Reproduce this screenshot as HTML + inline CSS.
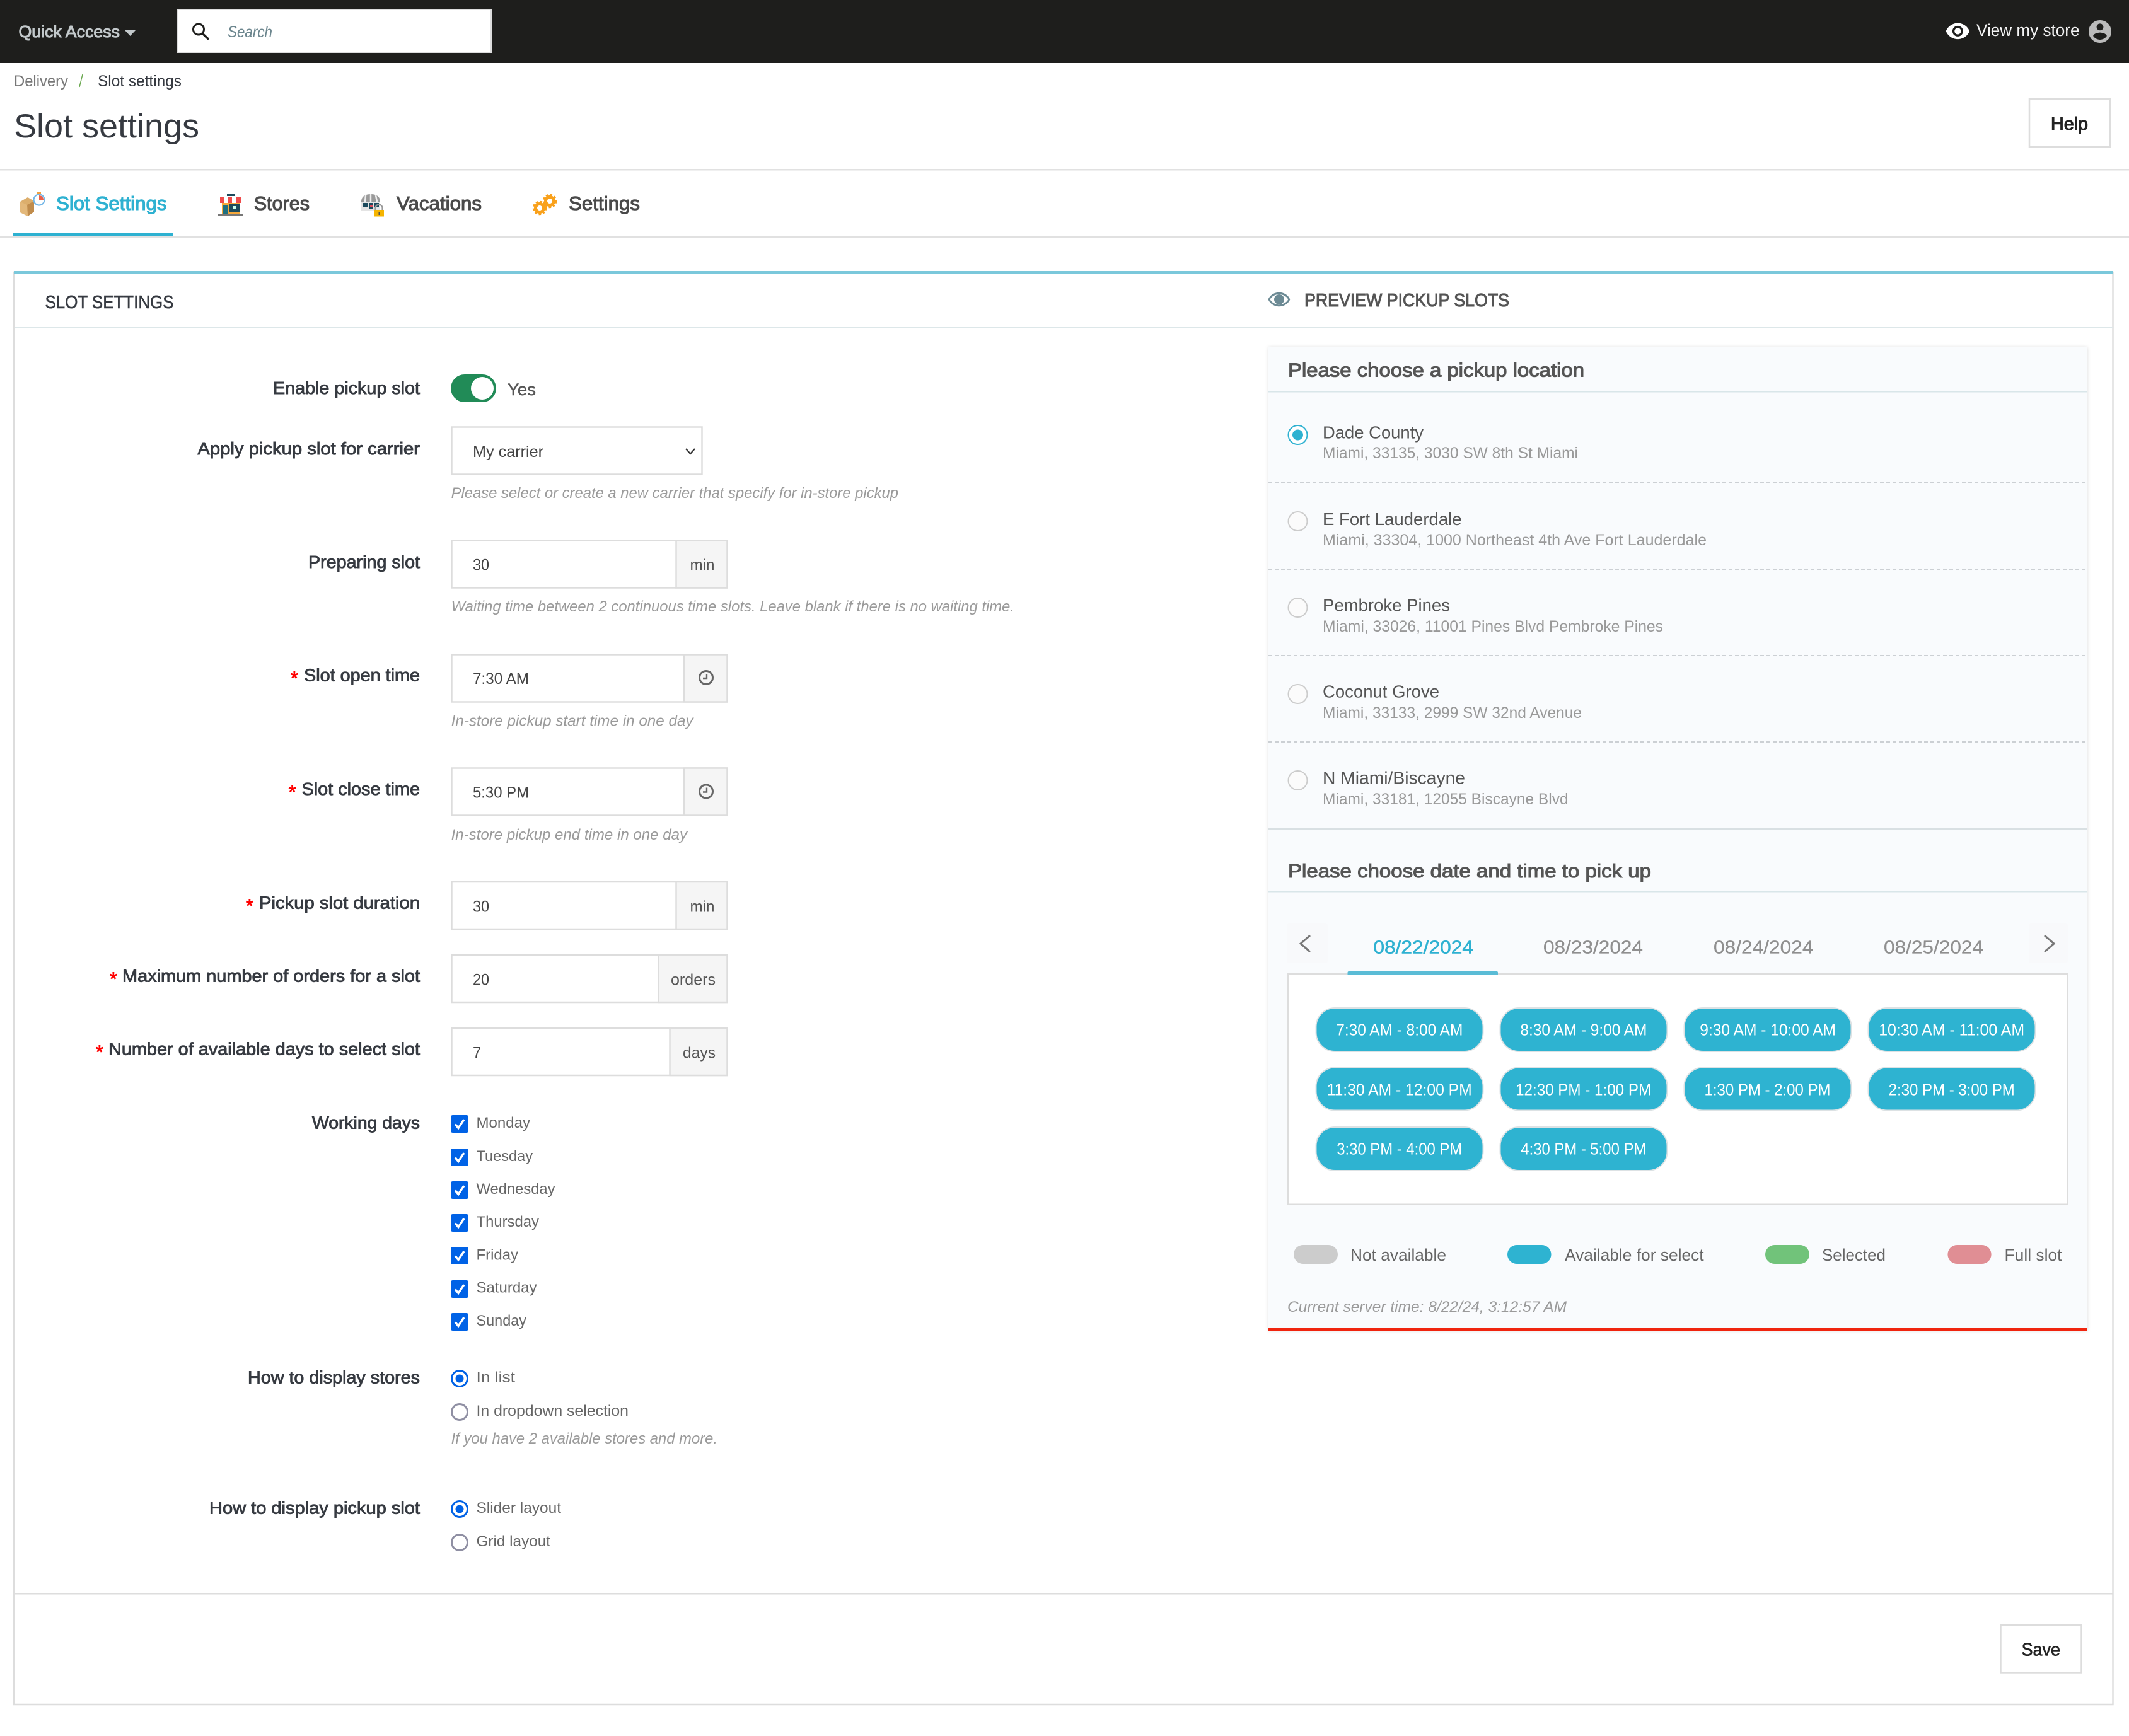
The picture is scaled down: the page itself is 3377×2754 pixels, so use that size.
<!DOCTYPE html>
<html lang="en"><head><meta charset="utf-8"><title>Slot settings</title>
<style>
html,body{margin:0;padding:0;background:#fff;width:3377px;height:2754px;overflow:hidden}
svg{display:block}
text{font-family:"Liberation Sans",sans-serif;white-space:pre}
.lab{font-size:28px;fill:#363a41;stroke:#363a41;stroke-width:.9px}
.star{font-size:30px;fill:#f00;stroke:#f00;stroke-width:.9px}
.val{font-size:25px;fill:#444}
.help{font-size:24px;fill:#9a9a9a;font-style:italic}
.opt{font-size:24.5px;fill:#666}
.tab{font-size:31px;fill:#4a4a4a;stroke:#4a4a4a;stroke-width:1.1px}
.h2{font-size:31px;fill:#555;stroke:#555;stroke-width:1.1px}
.name{font-size:28px;fill:#555}
.sub{font-size:25px;fill:#999}
.date{font-size:29px;fill:#8f8f8f;stroke:#8f8f8f;stroke-width:.3px}
.pt{font-size:26px;fill:#fff}
.leg{font-size:27px;fill:#666}
.pill{fill:#2eb3d1;stroke:#dde2e4;stroke-width:2}
.box{fill:#fff;stroke:#ddd;stroke-width:2.5}
.add{fill:#f5f5f5;stroke:#ddd;stroke-width:2.5}
</style></head><body>
<svg xmlns="http://www.w3.org/2000/svg" width="3377" height="2754" viewBox="0 0 3377 2754">
<defs>
<g id="ck"><rect width="28" height="28" rx="3" fill="#0062e6"/><path d="M7 14.5l5 6L21 7" fill="none" stroke="#fff" stroke-width="3.4"/></g>
<g id="clk"><circle r="10.5" fill="none" stroke="#666" stroke-width="3"/><path d="M1 -6V1H-5" fill="none" stroke="#666" stroke-width="2.4"/></g>
<g id="gear"><circle r="6.5" fill="none" stroke="#f9a11b" stroke-width="5"/><circle r="9.5" fill="none" stroke="#f9a11b" stroke-width="3.6" stroke-dasharray="3.4 3"/></g>
</defs>

<!-- top bar -->
<rect width="3377" height="100" fill="#1e1e1c"/>
<text x="29.5" y="59" font-size="26" fill="#c3c9cb" stroke="#c3c9cb" stroke-width="1" textLength="160.5" lengthAdjust="spacingAndGlyphs">Quick Access</text>
<path d="M198 48h17l-8.500 9z" fill="#c3c9cb"/>
<rect x="281" y="15" width="498" height="68" fill="#fff" stroke="#ddd" stroke-width="2"/>
<circle cx="315" cy="46.500" r="8.500" fill="none" stroke="#1e1e1c" stroke-width="3"/>
<path d="M321 53l10 9.500" stroke="#1e1e1c" stroke-width="3.400" fill="none"/>
<text x="361" y="59" font-size="25" font-style="italic" fill="#6c868e" textLength="71" lengthAdjust="spacingAndGlyphs">Search</text>
<path transform="translate(3085 29) scale(1.7)" fill="#fff" d="M12 4.500C7 4.500 2.730 7.610 1 12c1.730 4.390 6 7.500 11 7.500s9.270-3.110 11-7.500c-1.730-4.390-6-7.500-11-7.500zM12 17c-2.760 0-5-2.240-5-5s2.240-5 5-5 5 2.240 5 5-2.240 5-5 5zm0-8c-1.660 0-3 1.340-3 3s1.340 3 3 3 3-1.340 3-3-1.340-3-3-3z"/>
<text x="3135" y="57" font-size="27" fill="#f4f4f4" textLength="163.500" lengthAdjust="spacingAndGlyphs">View my store</text>
<path transform="translate(3309.400 28.400) scale(1.8)" fill="#bbb" d="M12 2C6.480 2 2 6.480 2 12s4.480 10 10 10 10-4.480 10-10S17.520 2 12 2zm0 3c1.660 0 3 1.340 3 3s-1.340 3-3 3-3-1.340-3-3 1.340-3 3-3zm0 14.200c-2.500 0-4.710-1.280-6-3.220.030-1.990 4-3.080 6-3.080 1.990 0 5.970 1.090 6 3.080-1.290 1.940-3.500 3.220-6 3.220z"/>

<!-- page head -->
<text x="22" y="137" font-size="25" fill="#777" textLength="86" lengthAdjust="spacingAndGlyphs">Delivery</text>
<path d="M126 138l5-20" stroke="#6aa84f" stroke-width="1.500" fill="none"/>
<text x="155" y="137" font-size="25" fill="#363a41" textLength="133" lengthAdjust="spacingAndGlyphs">Slot settings</text>
<text x="22" y="218" font-size="53" fill="#363a41" textLength="294" lengthAdjust="spacingAndGlyphs">Slot settings</text>
<rect x="3219" y="157" width="128" height="76" fill="#fff" stroke="#ddd" stroke-width="2.500"/>
<text x="3253" y="206" font-size="29" fill="#222" stroke="#222" stroke-width="1.100" textLength="59" lengthAdjust="spacingAndGlyphs">Help</text>
<rect y="268" width="3377" height="2.500" fill="#e1e1e1"/>

<!-- tabs -->
<rect y="375" width="3377" height="2" fill="#e1e1e1"/>
<rect x="21" y="369" width="254" height="6" fill="#2eb1d1"/>
<!-- box icon -->
<path d="M32 320l12-7 10 6 0 17-10 7-12-6z" fill="#dcae6c"/><path d="M43 325l11-6v17l-10 7z" fill="#c08c4c"/><path d="M32 320l11 5 1 18-12-6z" fill="#e3b87a"/>
<circle cx="62" cy="317" r="8.500" fill="#fff" stroke="#76b8e8" stroke-width="2.200"/><path d="M62 317v-7a7 7 0 0 1 7 7z" fill="#e8604c"/><rect x="59" y="305" width="6" height="2.500" fill="#f0a040"/>
<text x="89" y="333" class="tab" style="fill:#2eb1d1;stroke:#2eb1d1" textLength="175.500" lengthAdjust="spacingAndGlyphs">Slot Settings</text>
<!-- store icon -->
<rect x="352" y="322" width="29" height="18" fill="#f6a83a"/><rect x="353" y="325" width="8" height="15" fill="#1f6f80"/><rect x="364" y="324" width="16" height="12" fill="#1c4a5c"/><rect x="369" y="327" width="6" height="5" fill="#cfe"/>
<rect x="349" y="312" width="33" height="10" fill="#fff"/><path d="M349 312h6v10h-6zM361 312h7v10h-7zM375 312h7v10h-7z" fill="#ef4b4b"/>
<rect x="360" y="307" width="12" height="4" fill="#1c4a5c"/><rect x="345" y="340" width="40" height="2.500" fill="#777"/>
<text x="402.700" y="333" class="tab" textLength="88.300" lengthAdjust="spacingAndGlyphs">Stores</text>
<!-- vacations icon -->
<path d="M573 320c0-8 6-12 15-12s15 4 15 12z" fill="#9a9a9a"/><path d="M580 310l-1 10M588 308v12M596 310l2 10" stroke="#eee" stroke-width="2.500"/>
<rect x="573" y="320" width="30" height="15" fill="#e4e4e4"/><rect x="576" y="322" width="7" height="6" fill="#1c4a5c"/><rect x="586" y="322" width="5" height="9" fill="#1c4a5c"/><rect x="594" y="322" width="7" height="6" fill="#1c4a5c"/><rect x="587" y="325" width="4" height="3" fill="#e14b5a"/>
<path d="M595.500 334v-4a5.500 5.500 0 0 1 11 0v4" fill="none" stroke="#999" stroke-width="2.200"/><rect x="593" y="333" width="16" height="10.500" fill="#f5b400"/><rect x="600.500" y="336" width="1.800" height="5" fill="#555"/>
<text x="629" y="333" class="tab" textLength="135" lengthAdjust="spacingAndGlyphs">Vacations</text>
<use href="#gear" x="872" y="319"/><use href="#gear" x="856" y="330"/>
<text x="902" y="333" class="tab" textLength="113" lengthAdjust="spacingAndGlyphs">Settings</text>

<!-- main panel -->
<rect x="22" y="432" width="3329.500" height="2272" fill="#fff" stroke="#ddd" stroke-width="2.500"/>
<rect x="22" y="430" width="3330" height="4" fill="#7ac8db"/>
<rect x="23" y="518" width="3328" height="2.500" fill="#dde7e9"/>
<rect x="23" y="2527" width="3328" height="2.500" fill="#ddd"/>
<text x="71.500" y="489" font-size="29" fill="#363a41" stroke="#363a41" stroke-width=".5" textLength="204" lengthAdjust="spacingAndGlyphs">SLOT SETTINGS</text>
<path transform="translate(2010 457) scale(1.58 1.5)" fill="#6c8a94" d="M12 4.500C7 4.500 2.730 7.610 1 12c1.730 4.390 6 7.500 11 7.500s9.270-3.110 11-7.500c-1.730-4.390-6-7.500-11-7.500zM12 17.500c-3.500 0-8-2.500-9-5.500 1-3 5.500-5.500 9-5.500s8 2.500 9 5.500c-1 3-5.500 5.500-9 5.500z"/>
<circle cx="2029" cy="475" r="8" fill="#6c8a94"/>
<text x="2069" y="486" font-size="29" fill="#555" stroke="#555" stroke-width="1" textLength="325" lengthAdjust="spacingAndGlyphs">PREVIEW PICKUP SLOTS</text>

<!-- form -->
<text x="433" y="625" class="lab" textLength="233" lengthAdjust="spacingAndGlyphs">Enable pickup slot</text>
<rect x="715" y="594" width="72" height="44" rx="22" fill="#218b57"/><circle cx="765" cy="616" r="18" fill="#fff"/>
<text x="805" y="627" class="val" style="font-size:27px;fill:#555;stroke:#555;stroke-width:.4px" textLength="45" lengthAdjust="spacingAndGlyphs">Yes</text>

<text x="313.400" y="721" class="lab" textLength="352.600" lengthAdjust="spacingAndGlyphs">Apply pickup slot for carrier</text>
<rect x="716.500" y="677.500" width="397" height="75" class="box"/>
<text x="750" y="725" class="val" textLength="112" lengthAdjust="spacingAndGlyphs">My carrier</text>
<path d="M1088 712l7 8 7-8" fill="none" stroke="#333" stroke-width="2.200"/>
<text x="715.600" y="790" class="help" textLength="709.400" lengthAdjust="spacingAndGlyphs">Please select or create a new carrier that specify for in-store pickup</text>

<text x="489" y="901" class="lab" textLength="177" lengthAdjust="spacingAndGlyphs">Preparing slot</text>
<rect x="716.500" y="857.500" width="437" height="75" class="box"/><rect x="1072.500" y="857.500" width="81" height="75" class="add"/>
<text x="750" y="904.500" class="val" textLength="26" lengthAdjust="spacingAndGlyphs">30</text>
<text x="1094.500" y="904.500" class="val" style="fill:#555" textLength="39" lengthAdjust="spacingAndGlyphs">min</text>
<text x="715.600" y="970" class="help" textLength="893.400" lengthAdjust="spacingAndGlyphs">Waiting time between 2 continuous time slots. Leave blank if there is no waiting time.</text>

<text x="461" y="1086" class="star">*</text>
<text x="482" y="1080.500" class="lab" textLength="184" lengthAdjust="spacingAndGlyphs">Slot open time</text>
<rect x="716.500" y="1038.500" width="437" height="75" class="box"/><rect x="1085" y="1038.500" width="68.500" height="75" class="add"/>
<text x="750" y="1085" class="val" textLength="89" lengthAdjust="spacingAndGlyphs">7:30 AM</text>
<use href="#clk" x="1120" y="1075"/>
<text x="715.600" y="1151.500" class="help" textLength="384" lengthAdjust="spacingAndGlyphs">In-store pickup start time in one day</text>

<text x="457.700" y="1266.500" class="star">*</text>
<text x="478.500" y="1261" class="lab" textLength="187.500" lengthAdjust="spacingAndGlyphs">Slot close time</text>
<rect x="716.500" y="1218.500" width="437" height="75" class="box"/><rect x="1085" y="1218.500" width="68.500" height="75" class="add"/>
<text x="750" y="1265.500" class="val" textLength="89" lengthAdjust="spacingAndGlyphs">5:30 PM</text>
<use href="#clk" x="1120" y="1255.500"/>
<text x="715.600" y="1332" class="help" textLength="374.400" lengthAdjust="spacingAndGlyphs">In-store pickup end time in one day</text>

<text x="390" y="1447" class="star">*</text>
<text x="411" y="1441.500" class="lab" textLength="255" lengthAdjust="spacingAndGlyphs">Pickup slot duration</text>
<rect x="716.500" y="1399" width="437" height="75" class="box"/><rect x="1072.500" y="1399" width="81" height="75" class="add"/>
<text x="750" y="1446.500" class="val" textLength="26" lengthAdjust="spacingAndGlyphs">30</text>
<text x="1094.500" y="1446.500" class="val" style="fill:#555" textLength="39" lengthAdjust="spacingAndGlyphs">min</text>

<text x="174" y="1563" class="star">*</text>
<text x="194" y="1557.500" class="lab" textLength="472" lengthAdjust="spacingAndGlyphs">Maximum number of orders for a slot</text>
<rect x="716.500" y="1515" width="437" height="75" class="box"/><rect x="1044.500" y="1515" width="109" height="75" class="add"/>
<text x="750" y="1562.500" class="val" textLength="26" lengthAdjust="spacingAndGlyphs">20</text>
<text x="1064" y="1562.500" class="val" style="fill:#555" textLength="71" lengthAdjust="spacingAndGlyphs">orders</text>

<text x="152" y="1679" class="star">*</text>
<text x="172" y="1673.500" class="lab" textLength="494" lengthAdjust="spacingAndGlyphs">Number of available days to select slot</text>
<rect x="716.500" y="1631" width="437" height="75" class="box"/><rect x="1062.500" y="1631" width="91" height="75" class="add"/>
<text x="750" y="1678.500" class="val" textLength="13" lengthAdjust="spacingAndGlyphs">7</text>
<text x="1083" y="1678.500" class="val" style="fill:#555" textLength="52" lengthAdjust="spacingAndGlyphs">days</text>

<text x="495" y="1790.500" class="lab" textLength="171" lengthAdjust="spacingAndGlyphs">Working days</text>
<use href="#ck" x="715" y="1769"/><text x="755.500" y="1789" class="opt" textLength="85.500" lengthAdjust="spacingAndGlyphs">Monday</text>
<use href="#ck" x="715" y="1822"/><text x="755.500" y="1842" class="opt" textLength="89.500" lengthAdjust="spacingAndGlyphs">Tuesday</text>
<use href="#ck" x="715" y="1874"/><text x="755.500" y="1894" class="opt" textLength="125" lengthAdjust="spacingAndGlyphs">Wednesday</text>
<use href="#ck" x="715" y="1926"/><text x="755.500" y="1946" class="opt" textLength="99.500" lengthAdjust="spacingAndGlyphs">Thursday</text>
<use href="#ck" x="715" y="1978"/><text x="755.500" y="1998.500" class="opt" textLength="66.500" lengthAdjust="spacingAndGlyphs">Friday</text>
<use href="#ck" x="715" y="2031"/><text x="755.500" y="2050.500" class="opt" textLength="96" lengthAdjust="spacingAndGlyphs">Saturday</text>
<use href="#ck" x="715" y="2083"/><text x="755.500" y="2103" class="opt" textLength="79.500" lengthAdjust="spacingAndGlyphs">Sunday</text>

<text x="393" y="2194.500" class="lab" textLength="273" lengthAdjust="spacingAndGlyphs">How to display stores</text>
<circle cx="729" cy="2187" r="12.500" fill="#fff" stroke="#0062e6" stroke-width="3"/><circle cx="729" cy="2187" r="6.500" fill="#0062e6"/>
<text x="755.500" y="2193" class="opt" textLength="61.500" lengthAdjust="spacingAndGlyphs">In list</text>
<circle cx="729" cy="2240" r="12.500" fill="#fff" stroke="#8f8fa3" stroke-width="3"/>
<text x="755.500" y="2246" class="opt" textLength="241.500" lengthAdjust="spacingAndGlyphs">In dropdown selection</text>
<text x="715.600" y="2290" class="help" textLength="422.400" lengthAdjust="spacingAndGlyphs">If you have 2 available stores and more.</text>

<text x="332" y="2401.500" class="lab" textLength="334" lengthAdjust="spacingAndGlyphs">How to display pickup slot</text>
<circle cx="729" cy="2394" r="12.500" fill="#fff" stroke="#0062e6" stroke-width="3"/><circle cx="729" cy="2394" r="6.500" fill="#0062e6"/>
<text x="755.500" y="2400" class="opt" textLength="134.500" lengthAdjust="spacingAndGlyphs">Slider layout</text>
<circle cx="729" cy="2447" r="12.500" fill="#fff" stroke="#8f8fa3" stroke-width="3"/>
<text x="755.500" y="2453" class="opt" textLength="117.500" lengthAdjust="spacingAndGlyphs">Grid layout</text>

<rect x="3173.500" y="2578" width="128" height="75.500" fill="#fff" stroke="#ddd" stroke-width="2.500"/>
<text x="3206.600" y="2626.700" font-size="29" fill="#222" stroke="#222" stroke-width=".6" textLength="61.400" lengthAdjust="spacingAndGlyphs">Save</text>

<!-- preview card -->
<rect x="2012" y="551" width="1299" height="1560" fill="#f9fbfd" style="filter:drop-shadow(0 0 3px rgba(0,0,0,.14))"/>
<text x="2043" y="597.500" class="h2" textLength="470" lengthAdjust="spacingAndGlyphs">Please choose a pickup location</text>
<rect x="2012" y="620" width="1299" height="2.500" fill="#d9e6e9"/>

<circle cx="2058.500" cy="690" r="15" fill="#fff" stroke="#2eb1d1" stroke-width="2"/><circle cx="2058.500" cy="690" r="8.500" fill="#2eb1d1"/>
<text x="2098" y="695.500" class="name" textLength="160" lengthAdjust="spacingAndGlyphs">Dade County</text>
<text x="2098" y="727" class="sub" textLength="405" lengthAdjust="spacingAndGlyphs">Miami, 33135, 3030 SW 8th St Miami</text>
<path d="M2012 765.500h1299M2012 903h1299M2012 1040h1299M2012 1177h1299" stroke="#ccd0d4" stroke-width="2" stroke-dasharray="6 4" fill="none"/>

<circle cx="2058.500" cy="827" r="15" fill="#fbfbfb" stroke="#ccc" stroke-width="2"/>
<text x="2098" y="833" class="name" textLength="220.600" lengthAdjust="spacingAndGlyphs">E Fort Lauderdale</text>
<text x="2098" y="865" class="sub" textLength="609" lengthAdjust="spacingAndGlyphs">Miami, 33304, 1000 Northeast 4th Ave Fort Lauderdale</text>

<circle cx="2058.500" cy="964" r="15" fill="#fbfbfb" stroke="#ccc" stroke-width="2"/>
<text x="2098" y="969.500" class="name" textLength="202" lengthAdjust="spacingAndGlyphs">Pembroke Pines</text>
<text x="2098" y="1002" class="sub" textLength="540" lengthAdjust="spacingAndGlyphs">Miami, 33026, 11001 Pines Blvd Pembroke Pines</text>

<circle cx="2058.500" cy="1101" r="15" fill="#fbfbfb" stroke="#ccc" stroke-width="2"/>
<text x="2098" y="1106.500" class="name" textLength="185" lengthAdjust="spacingAndGlyphs">Coconut Grove</text>
<text x="2098" y="1139" class="sub" textLength="411" lengthAdjust="spacingAndGlyphs">Miami, 33133, 2999 SW 32nd Avenue</text>

<circle cx="2058.500" cy="1238" r="15" fill="#fbfbfb" stroke="#ccc" stroke-width="2"/>
<text x="2098" y="1243.500" class="name" textLength="226" lengthAdjust="spacingAndGlyphs">N Miami/Biscayne</text>
<text x="2098" y="1276" class="sub" textLength="389.600" lengthAdjust="spacingAndGlyphs">Miami, 33181, 12055 Biscayne Blvd</text>

<rect x="2012" y="1314" width="1299" height="2.500" fill="#d9e0e3"/>
<text x="2043" y="1392" class="h2" textLength="576" lengthAdjust="spacingAndGlyphs">Please choose date and time to pick up</text>
<rect x="2012" y="1413" width="1299" height="2.500" fill="#d9e6e9"/>

<rect x="2041" y="1465" width="65" height="63" rx="4" fill="#f8f9fb"/>
<rect x="3218" y="1465" width="62" height="63" rx="4" fill="#f8f9fb"/>
<path d="M2078 1484l-15 13 15 13" fill="none" stroke="#777" stroke-width="3"/>
<path d="M3243 1484l15 13-15 13" fill="none" stroke="#777" stroke-width="3"/>
<text x="2178.400" y="1512.500" class="date" style="fill:#2eb1d1;stroke:#2eb1d1;stroke-width:.6px" textLength="158.600" lengthAdjust="spacingAndGlyphs">08/22/2024</text>
<text x="2448" y="1512.500" class="date" textLength="158" lengthAdjust="spacingAndGlyphs">08/23/2024</text>
<text x="2718" y="1512.500" class="date" textLength="158.500" lengthAdjust="spacingAndGlyphs">08/24/2024</text>
<text x="2988" y="1512.500" class="date" textLength="158" lengthAdjust="spacingAndGlyphs">08/25/2024</text>

<rect x="2043" y="1545" width="1237" height="365.500" fill="#fff" stroke="#ddd" stroke-width="2"/>
<path d="M2137.500 1546v-3a2 2 0 0 1 2-2h234.500a2 2 0 0 1 2 2v3z" fill="#5abcd6"/>

<rect x="2087.500" y="1599" width="265" height="69" rx="30" class="pill"/>
<rect x="2379.500" y="1599" width="265" height="69" rx="30" class="pill"/>
<rect x="2671.500" y="1599" width="265" height="69" rx="30" class="pill"/>
<rect x="2963.500" y="1599" width="265" height="69" rx="30" class="pill"/>
<rect x="2087.500" y="1693.500" width="265" height="68" rx="30" class="pill"/>
<rect x="2379.500" y="1693.500" width="265" height="68" rx="30" class="pill"/>
<rect x="2671.500" y="1693.500" width="265" height="68" rx="30" class="pill"/>
<rect x="2963.500" y="1693.500" width="265" height="68" rx="30" class="pill"/>
<rect x="2087.500" y="1788" width="265" height="69" rx="30" class="pill"/>
<rect x="2379.500" y="1788" width="265" height="69" rx="30" class="pill"/>

<text x="2119.300" y="1642.500" class="pt" textLength="201" lengthAdjust="spacingAndGlyphs">7:30 AM - 8:00 AM</text>
<text x="2411.400" y="1642.500" class="pt" textLength="201" lengthAdjust="spacingAndGlyphs">8:30 AM - 9:00 AM</text>
<text x="2696.300" y="1642.500" class="pt" textLength="215.700" lengthAdjust="spacingAndGlyphs">9:30 AM - 10:00 AM</text>
<text x="2980.200" y="1642.500" class="pt" textLength="231" lengthAdjust="spacingAndGlyphs">10:30 AM - 11:00 AM</text>
<text x="2104.700" y="1737.400" class="pt" textLength="230" lengthAdjust="spacingAndGlyphs">11:30 AM - 12:00 PM</text>
<text x="2404.100" y="1737.400" class="pt" textLength="215" lengthAdjust="spacingAndGlyphs">12:30 PM - 1:00 PM</text>
<text x="2703.500" y="1737.400" class="pt" textLength="200" lengthAdjust="spacingAndGlyphs">1:30 PM - 2:00 PM</text>
<text x="2995.700" y="1737.400" class="pt" textLength="200" lengthAdjust="spacingAndGlyphs">2:30 PM - 3:00 PM</text>
<text x="2120.200" y="1831.700" class="pt" textLength="199" lengthAdjust="spacingAndGlyphs">3:30 PM - 4:00 PM</text>
<text x="2412.300" y="1831.700" class="pt" textLength="199" lengthAdjust="spacingAndGlyphs">4:30 PM - 5:00 PM</text>

<rect x="2052" y="1975" width="70" height="30" rx="15" fill="#ccc"/>
<text x="2142" y="2000" class="leg" textLength="152" lengthAdjust="spacingAndGlyphs">Not available</text>
<rect x="2391" y="1975" width="69.500" height="30" rx="15" fill="#2eb3d1"/>
<text x="2482" y="2000" class="leg" textLength="220.600" lengthAdjust="spacingAndGlyphs">Available for select</text>
<rect x="2800" y="1975" width="70" height="30" rx="15" fill="#71c37a"/>
<text x="2890" y="2000" class="leg" textLength="101" lengthAdjust="spacingAndGlyphs">Selected</text>
<rect x="3089.400" y="1975" width="69.200" height="30" rx="15" fill="#e08e94"/>
<text x="3179.500" y="2000" class="leg" textLength="91" lengthAdjust="spacingAndGlyphs">Full slot</text>

<text x="2042" y="2081" class="help" textLength="443" lengthAdjust="spacingAndGlyphs">Current server time: 8/22/24, 3:12:57 AM</text>
<rect x="2012" y="2107" width="1299" height="4" fill="#f0250f"/>
</svg>
</body></html>
